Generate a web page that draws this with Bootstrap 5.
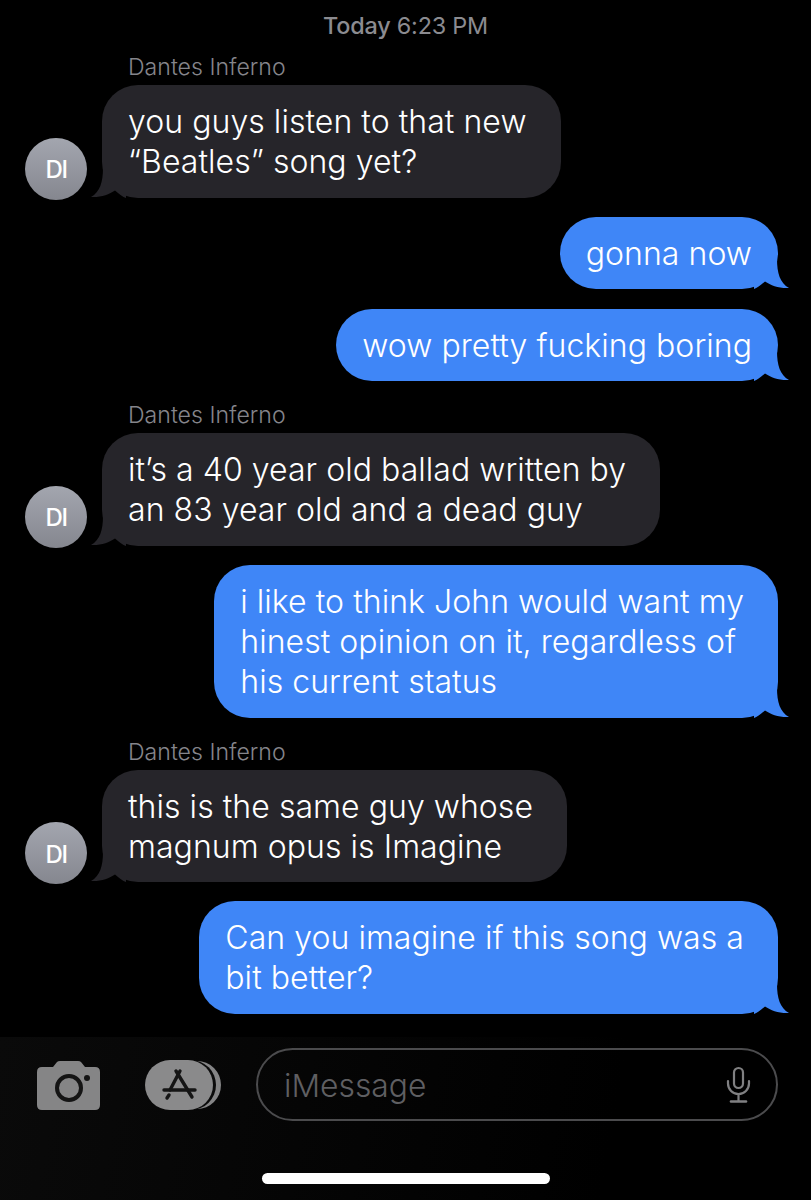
<!DOCTYPE html>
<html lang="en">
  <head>
    <meta charset="UTF-8" />
    <meta name="viewport" content="width=device-width, initial-scale=1.0" />
    <title>Messages</title>
    <link
      href="https://cdn.jsdelivr.net/npm/bootstrap@5.3.3/dist/css/bootstrap.min.css"
      rel="stylesheet"
    />
    <style>
      body {
        background: #000;
        color: #fff;
        font-family: Inter, "Liberation Sans", sans-serif;
        overflow: hidden;
      }

      .thread {
        height: 1037px;
      }

      .stamp {
        height: 44px;
        padding-top: 8px;
        font-size: 23.4px;
        line-height: 36px;
        color: #8b8b90;
        letter-spacing: -0.2px;
      }

      .stamp b {
        font-weight: 500;
      }

      .sender {
        margin: 21px 0 5px 128px;
        font-size: 23.1px;
        font-weight: 350;
        line-height: 26px;
        color: #85858b;
      }

      .stamp + .sender {
        margin-top: 10px;
      }

      .msg-in {
        padding-left: 25px;
        gap: 15px;
      }

      .msg-out {
        padding-right: 33px;
        margin-top: 19.2px;
      }

      .avatar {
        width: 62px;
        height: 62px;
        margin-bottom: -2px;
        padding-top: 3px;
        background: linear-gradient(#a3a6af, #85878f);
        font-size: 24px;
        font-weight: 500;
        letter-spacing: -1.5px;
      }

      .bubble {
        padding: 17px 26px 15.6px;
        border-radius: 36px;
        font-size: 32px;
        font-weight: 350;
        line-height: 40px;
        letter-spacing: 0.05px;
        white-space: nowrap;
      }

      .bubble-wrapped {
        padding-right: 34px;
      }

      .bubble-in {
        background: #26252a;
      }

      .bubble-out {
        background: #3f86f7;
      }

      .tail {
        position: absolute;
        bottom: 0;
        width: 35px;
        height: 30px;
      }

      .bubble-in .tail {
        left: -11px;
        fill: #26252a;
        transform: scaleX(-1);
      }

      .bubble-out .tail {
        right: -11px;
        fill: #3f86f7;
      }

      .composer {
        height: 163px;
        background: linear-gradient(100deg, #0a0a0a, #000 75%);
      }

      .composer-row {
        padding: 11px 33px 0 37px;
      }

      .camera-icon {
        width: 63px;
        height: 50px;
        margin-right: 45px;
      }

      .apps-icon {
        width: 78px;
        height: 50px;
        margin-right: 33px;
      }

      .msg-field {
        height: 73px;
        padding: 0 24px 0 26px;
        border: 2px solid #4b4b4d;
        border-radius: 37px;
        font-size: 31.8px;
        font-weight: 350;
        color: #5f5f62;
      }

      .msg-field span {
        padding-top: 2px;
      }

      .mic-icon {
        width: 27px;
        height: 37px;
      }

      .home-bar {
        width: 288px;
        height: 11px;
        margin-top: 52px;
        background: #fff;
        border-radius: 6px;
      }
    </style>
  </head>
  <body>
    <svg width="0" height="0" class="d-block">
      <symbol id="tail-shape" viewBox="0 0 35 30">
        <path d="M0 0H23C23 14 26 24 35 29C25 29.5 17 26.5 11 22.5C7 26 3 29 0 30Z" />
      </symbol>
    </svg>

    <div class="thread">
      <div class="stamp text-center"><b>Today</b> 6:23 PM</div>

      <div class="sender">Dantes Inferno</div>
      <div class="msg-in d-flex align-items-end">
        <div class="avatar rounded-circle flex-shrink-0 d-flex align-items-center justify-content-center">DI</div>
        <div class="bubble bubble-wrapped bubble-in position-relative">
          you guys listen to that new<br />“Beatles” song yet?
          <svg class="tail"><use href="#tail-shape" /></svg>
        </div>
      </div>

      <div class="msg-out d-flex justify-content-end">
        <div class="bubble bubble-out position-relative">
          gonna now
          <svg class="tail"><use href="#tail-shape" /></svg>
        </div>
      </div>
      <div class="msg-out d-flex justify-content-end">
        <div class="bubble bubble-out position-relative">
          wow pretty fucking boring
          <svg class="tail"><use href="#tail-shape" /></svg>
        </div>
      </div>

      <div class="sender">Dantes Inferno</div>
      <div class="msg-in d-flex align-items-end">
        <div class="avatar rounded-circle flex-shrink-0 d-flex align-items-center justify-content-center">DI</div>
        <div class="bubble bubble-wrapped bubble-in position-relative">
          it’s a 40 year old ballad written by<br />an 83 year old and a dead guy
          <svg class="tail"><use href="#tail-shape" /></svg>
        </div>
      </div>

      <div class="msg-out d-flex justify-content-end">
        <div class="bubble bubble-wrapped bubble-out position-relative">
          i like to think John would want my<br />hinest opinion on it, regardless of<br />his current status
          <svg class="tail"><use href="#tail-shape" /></svg>
        </div>
      </div>

      <div class="sender">Dantes Inferno</div>
      <div class="msg-in d-flex align-items-end">
        <div class="avatar rounded-circle flex-shrink-0 d-flex align-items-center justify-content-center">DI</div>
        <div class="bubble bubble-wrapped bubble-in position-relative">
          this is the same guy whose<br />magnum opus is Imagine
          <svg class="tail"><use href="#tail-shape" /></svg>
        </div>
      </div>

      <div class="msg-out d-flex justify-content-end">
        <div class="bubble bubble-wrapped bubble-out position-relative">
          Can you imagine if this song was a<br />bit better?
          <svg class="tail"><use href="#tail-shape" /></svg>
        </div>
      </div>
    </div>

    <div class="composer">
      <div class="composer-row d-flex align-items-center">
        <svg class="camera-icon flex-shrink-0" viewBox="0 0 63 50">
          <path fill="#858586" d="M5 7H16L20 2Q21 1 23 1H41Q43 1 44 2L48 7H58Q63 7 63 12V45Q63 50 58 50H5Q0 50 0 45V12Q0 7 5 7Z" />
          <circle cx="32" cy="28" r="12" fill="none" stroke="#141414" stroke-width="4" />
          <circle cx="50" cy="18" r="3" fill="#141414" />
        </svg>
        <svg class="apps-icon flex-shrink-0" viewBox="0 0 78 50">
          <rect x="8" y="1" width="68" height="48" rx="24" fill="#858586" />
          <rect x="3" y="0" width="68" height="50" rx="25" fill="#0c0c0c" />
          <rect x="0" y="0" width="68" height="50" rx="25" fill="#8a8a8b" />
          <g fill="none" stroke="#151515" stroke-width="3.4" stroke-linecap="round">
            <path d="M35 11L25 30" />
            <path d="M31 11L47 37" />
            <path d="M19 30H50" />
            <path d="M24 35L22 38" />
          </g>
        </svg>
        <div class="msg-field flex-grow-1 d-flex align-items-center justify-content-between">
          <span>iMessage</span>
          <svg class="mic-icon flex-shrink-0" viewBox="0 0 27 37" fill="none" stroke="#808082" stroke-width="2.2" stroke-linecap="round">
            <rect x="9" y="2" width="9" height="20" rx="4.5" />
            <path d="M3 15V17.5A10.5 10.5 0 0 0 24 17.5V15" />
            <path d="M13.5 28V35" />
            <path d="M6 35.5H21" stroke-width="2.6" />
          </svg>
        </div>
      </div>
      <div class="home-bar mx-auto"></div>
    </div>
  </body>
</html>
